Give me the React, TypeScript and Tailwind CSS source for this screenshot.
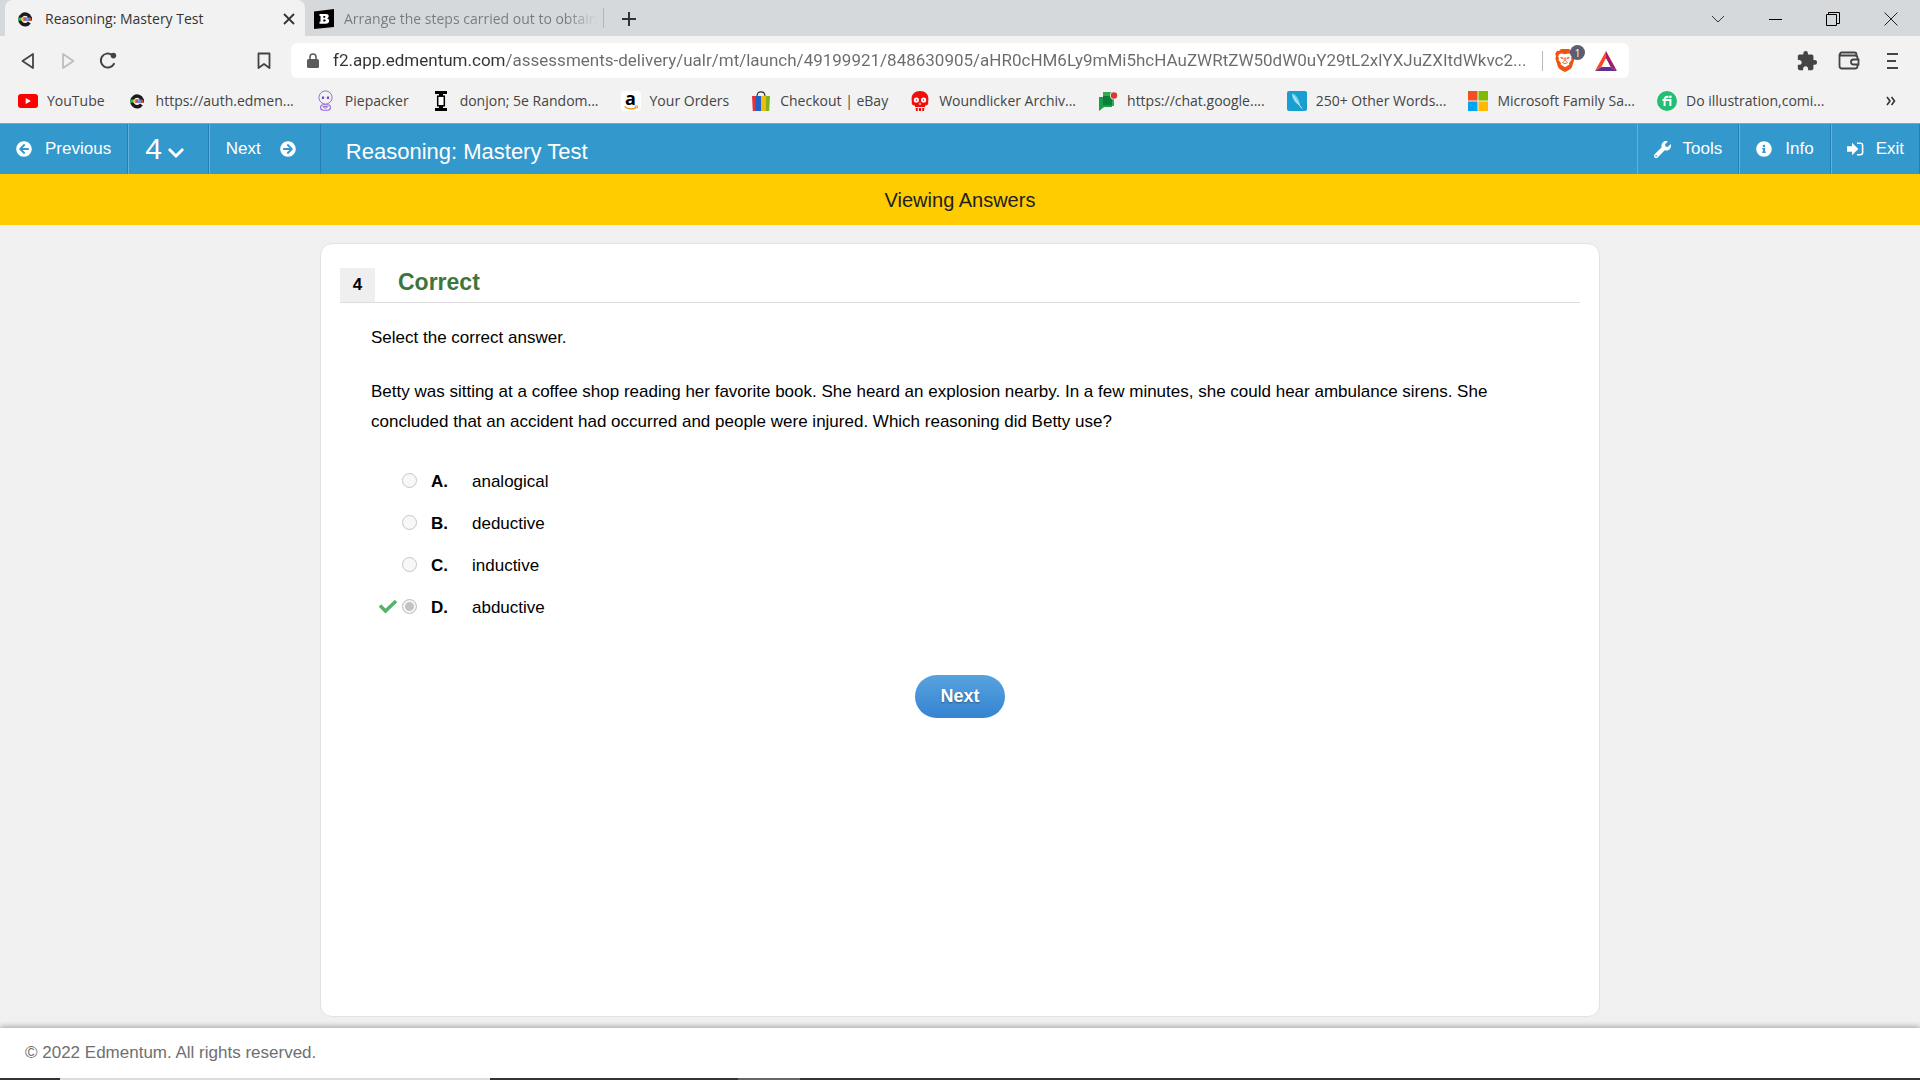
import React from "react";
import type { ReactNode } from "react";
import { FaArrowCircleLeft, FaArrowCircleRight, FaChevronDown, FaInfoCircle, FaWrench } from "react-icons/fa";
import { MdExtension } from "react-icons/md";

const PATH =
  "f2.app.edmentum.com/assessments-delivery/ualr/mt/launch/49199921/848630905/aHR0cHM6Ly9mMi5hcHAuZWRtZW50dW0uY29tL2xlYXJuZXItdWkvc2...";

function EdmentumIcon() {
  return (
    <svg width="20" height="16" viewBox="0 0 20 16" aria-hidden="true">
      <path d="M15 6.500A5.200 5.400 0 1 0 14.400 11.500" fill="none" stroke="#1b1b1b" strokeWidth="3.400" />
      <path d="M8 9.500h9V6h-4z" fill="#1b1b1b" />
      <rect x="3.200" y="6.600" width="3" height="3" fill="#2fb457" />
      <rect x="6" y="6.600" width="3" height="3" fill="#f6c21c" />
      <rect x="8.400" y="6.200" width="3" height="3.600" fill="#ef3f7f" />
      <rect x="11" y="6.600" width="3" height="3" fill="#36b3e6" />
      <rect x="13.600" y="6.600" width="2.800" height="3" fill="#e2403b" />
    </svg>
  );
}

function YouTubeIcon() {
  return (
    <svg width="20" height="20" viewBox="0 0 20 20" aria-hidden="true">
      <rect y="3" width="20" height="14" rx="3" fill="#f00" />
      <path d="M7.700 7v6l5.200-3z" fill="#fff" />
    </svg>
  );
}

function PiepackerIcon() {
  return (
    <svg width="20" height="22" viewBox="0 0 20 22" fill="none" stroke="#9a6be0" aria-hidden="true">
      <circle cx="9.500" cy="7.500" r="6.600" strokeWidth="1" />
      <rect x="4.600" y="14.800" width="9.800" height="5.400" rx="2.700" strokeWidth="1.100" />
      <path d="M7 16.600c.8 2 3.900 2 4.800 0z" strokeWidth="1" />
      <path d="M7 6.500v2.500M12 6.500v2.500" stroke="#7b46cf" strokeWidth="2.200" />
    </svg>
  );
}

function DonjonIcon() {
  return (
    <svg width="20" height="20" viewBox="0 0 20 20" aria-hidden="true">
      <path d="M4 0h12v3h-4v2H8V3H4zM4 20h12v-3h-4v-2H8v2H4z" fill="#000" />
      <rect x="6.700" y="5.200" width="6.600" height="9.600" fill="#fff" stroke="#000" strokeWidth="1.500" />
    </svg>
  );
}

function AmazonIcon() {
  return (
    <span className="flex h-5 w-5 flex-col items-center rounded-sm bg-white">
      <span className="h-3.5 text-[18px] leading-[14px] font-bold text-black">a</span>
      <svg width="16" height="6" viewBox="0 0 16 6" aria-hidden="true">
        <path d="M1.500 1.500c4 3.200 9 3.200 12 .6" fill="none" stroke="#f39a1e" strokeWidth="1.500" />
        <path d="M11.600 1l3-.2-.6 2.800" fill="none" stroke="#f39a1e" strokeWidth="1" />
      </svg>
    </span>
  );
}

function EbayIcon() {
  return (
    <svg width="20" height="20" viewBox="0 0 20 20" aria-hidden="true">
      <path d="M6 5.500C6 2 7.500.8 10 .8s4 1.200 4 4.700" fill="none" stroke="#333" strokeWidth="1.200" />
      <path d="M1 5h4.600v15H1.800z" fill="#e2323b" />
      <path d="M4.600 5H10v15H4.600z" fill="#1f63c9" />
      <path d="M10 5h5v15h-5z" fill="#f5b80c" />
      <path d="M15 5h4l-.8 15H15z" fill="#7fb51c" />
    </svg>
  );
}

function SkullIcon() {
  return (
    <svg width="20" height="20" viewBox="0 0 20 20" aria-hidden="true">
      <path
        d="M10 0C4.800 0 1.600 3.200 1.600 7.600c0 2.600.4 3.200.2 5.400.8 1.400 2.400 1.400 3.200 1.700V16h10v-1.300c.8-.3 2.400-.3 3.200-1.700-.2-2.200.2-2.800.2-5.400C18.400 3.200 15.200 0 10 0z"
        fill="#f20d0d"
      />
      <path d="M5.600 17h2.200v3H6zM8.900 17h2.200v3H8.900zM12.200 17h2.200L14 20h-1.800z" fill="#f20d0d" />
      <circle cx="6.400" cy="9" r="2.600" fill="#fff" />
      <circle cx="13.600" cy="9" r="2.600" fill="#fff" />
      <path d="M10 11.400l-1.200 2.200h2.400z" fill="#fff" />
      <circle cx="6.600" cy="9" r=".7" fill="#f20d0d" />
      <circle cx="13.400" cy="9" r=".7" fill="#f20d0d" />
    </svg>
  );
}

function ChatIcon() {
  return (
    <svg width="20" height="20" viewBox="0 0 20 20" aria-hidden="true">
      <path d="M5 1h11v14H5z" fill="#34a853" />
      <path d="M1 6h4v8h9v2H6l-5 4z" fill="#14a044" />
      <path d="M5 5h9v9H5z" fill="#0b7f38" />
      <circle cx="16" cy="4.500" r="4" fill="#f2f2f2" />
      <circle cx="16" cy="4.500" r="3.200" fill="#d53b36" />
    </svg>
  );
}

function FeatherIcon() {
  return (
    <svg width="20" height="20" viewBox="0 0 20 20" aria-hidden="true">
      <rect width="20" height="20" rx="2" fill="#189fd0" />
      <path d="M5 2.500c3.500.2 7.500 6 8 11.500-4-.5-8.200-5.500-8-11.500z" fill="#7fcdea" />
      <path d="M6 4.500c2.500 4 5 8.500 9 13" stroke="#d9f3fc" strokeWidth="1" fill="none" />
    </svg>
  );
}

function MicrosoftIcon() {
  return (
    <svg width="20" height="20" viewBox="0 0 20 20" aria-hidden="true">
      <path d="M0 0h9.500v9.500H0z" fill="#f25022" />
      <path d="M10.500 0H20v9.500h-9.500z" fill="#7fba00" />
      <path d="M0 10.500h9.500V20H0z" fill="#00a4ef" />
      <path d="M10.500 10.500H20V20h-9.500z" fill="#ffb900" />
    </svg>
  );
}

function FiverrIcon() {
  return (
    <svg width="20" height="20" viewBox="0 0 20 20" aria-hidden="true">
      <circle cx="10" cy="10" r="10" fill="#22be74" />
      <path d="M7.600 15V8.600c0-2 .8-2.900 3-2.900h.9M5.400 9h8v6" fill="none" stroke="#fff" strokeWidth="2" />
      <circle cx="13.400" cy="5.900" r="1.300" fill="#fff" />
    </svg>
  );
}

function BrainlyIcon() {
  return (
    <svg width="20" height="20" viewBox="0 0 20 20" aria-hidden="true">
      <path d="M0 2.500L20 0v18L0 20z" fill="#000" />
      <path
        d="M5.500 5h6.200c2 0 3 .9 3 2.300 0 1-.6 1.800-1.600 2.100 1.300.2 2.100 1.100 2.100 2.400 0 1.900-1.400 2.900-3.600 2.900H5.500v-2h1V7h-1z"
        fill="#fff"
      />
      <path d="M9.300 7v1.700h1.200q.9 0 .9-.9 0-.8-.9-.8zM9.300 10.600v2h1.400q1 0 1-1t-1-1z" fill="#000" />
    </svg>
  );
}

function BraveIcon() {
  return (
    <svg width="20" height="23" viewBox="0 0 20 23" aria-hidden="true">
      <path d="M6 0h8l2 2 2-.2L19.800 5l-.8 2 .6 2.500L17 18c-.5 1.500-3.500 3.400-7 5-3.500-1.600-6.500-3.500-7-5L.4 9.500 1 7 .2 5 2 1.800 4 2z" fill="#f1520f" />
      <path d="M4.200 5l2.600-.6 3.200.8 3.200-.8 2.600.6 1.200 2.600-1 1.400.6 1.800-2.600 3.400.4 1.400L12 17l-2 1.200L8 17l-2.400-1.400.4-1.400-2.600-3.400L4 9 3 7.600z" fill="#fff" />
      <path d="M5 8l3 .6.6 1-1.800.3zM15 8l-3 .6-.6 1 1.800.3z" fill="#f1520f" />
      <path d="M9.300 8.500v3.500l-1.800 1.600L10 14.800l2.500-1.200-1.800-1.600V8.500" fill="none" stroke="#f1520f" strokeWidth=".8" />
    </svg>
  );
}

function BatIcon() {
  return (
    <svg width="22" height="20" viewBox="0 0 22 20" aria-hidden="true">
      <path d="M11 0L0 20l6.500-4L11 7.500z" fill="#ff4724" />
      <path d="M11 0l11 20-6.500-4L11 7.500z" fill="#9e1f63" />
      <path d="M0 20h22l-6.500-4h-9z" fill="#662d91" />
      <path d="M11 7.500L15.500 16h-9z" fill="#fff" />
    </svg>
  );
}

function ExitIcon() {
  return (
    <svg width="17" height="16" viewBox="0 0 17 16" fill="#fff" aria-hidden="true">
      <path d="M0 5.300h5V1.800L11.300 8 5 14.200v-3.500H0z" />
      <path d="M10 1.500h3.400c1.900 0 3 1.100 3 2.900v7.200c0 1.800-1.100 2.900-3 2.900H10v-1.600h3.300c1 0 1.500-.5 1.500-1.400V4.500c0-.9-.5-1.400-1.500-1.400H10z" />
    </svg>
  );
}

const bookmarks: { label: string; icon: ReactNode }[] = [
  { label: "YouTube", icon: <YouTubeIcon /> },
  { label: "https://auth.edmen...", icon: <EdmentumIcon /> },
  { label: "Piepacker", icon: <PiepackerIcon /> },
  { label: "donjon; 5e Random...", icon: <DonjonIcon /> },
  { label: "Your Orders", icon: <AmazonIcon /> },
  { label: "Checkout | eBay", icon: <EbayIcon /> },
  { label: "Woundlicker Archiv...", icon: <SkullIcon /> },
  { label: "https://chat.google....", icon: <ChatIcon /> },
  { label: "250+ Other Words...", icon: <FeatherIcon /> },
  { label: "Microsoft Family Sa...", icon: <MicrosoftIcon /> },
  { label: "Do illustration,comi...", icon: <FiverrIcon /> },
];

function TabStrip() {
  return (
    <div className="flex h-9 items-stretch bg-[#d5d9dc] pl-[5px] text-sm text-[#333]">
      <div className="flex w-[300px] items-center rounded-t-lg bg-[#f2f2f2] pt-0.5 pr-2 pl-2.5">
        <EdmentumIcon />
        <span className="ml-2.5 flex-1">Reasoning: Mastery Test</span>
        <button aria-label="Close tab" className="p-0.5">
          <svg width="12" height="12" viewBox="0 0 12 12" stroke="#333" strokeWidth="1.800" aria-hidden="true">
            <path d="M1 1l10 10M11 1L1 11" />
          </svg>
        </button>
      </div>
      <div className="flex w-[298px] items-center pt-0.5 pl-[9px]">
        <BrainlyIcon />
        <span className="ml-2.5 bg-[linear-gradient(90deg,#777a7c_88%,transparent)] bg-clip-text whitespace-nowrap text-transparent">
          Arrange the steps carried out to obtain
        </span>
      </div>
      <div className="my-2 w-px bg-[#b3b7ba]" />
      <button aria-label="New tab" className="px-[17px] pt-0.5">
        <svg width="16" height="16" viewBox="0 0 16 16" stroke="#333" strokeWidth="2" aria-hidden="true">
          <path d="M8 1v14M1 8h14" />
        </svg>
      </button>
      <div className="ml-auto flex items-center gap-11 pt-0.5 pr-[22px]">
        <button aria-label="Search tabs">
          <svg width="14" height="14" viewBox="0 0 14 14" fill="none" stroke="#333" aria-hidden="true">
            <path d="M1 4l6 6 6-6" />
          </svg>
        </button>
        <button aria-label="Minimize">
          <svg width="13" height="14" viewBox="0 0 13 14" aria-hidden="true">
            <path d="M0 7h13v1H0z" />
          </svg>
        </button>
        <button aria-label="Restore">
          <svg width="14" height="14" viewBox="0 0 14 14" fill="none" stroke="#000" aria-hidden="true">
            <path d="M.5 2.500h10v11H.500zM2.500 2.500v-2h11v11h-3" />
          </svg>
        </button>
        <button aria-label="Close window">
          <svg width="14" height="14" viewBox="0 0 14 14" fill="none" stroke="#222" aria-hidden="true">
            <path d="M.5.5l13 13M13.500.5l-13 13" />
          </svg>
        </button>
      </div>
    </div>
  );
}

function Toolbar() {
  return (
    <div className="flex h-[49px] items-center bg-[#f2f2f2] pl-5">
      <div className="flex items-center">
        <button aria-label="Back" className="w-10">
          <svg width="16" height="18" viewBox="0 0 16 18" fill="none" stroke="#444" strokeWidth="1.800" strokeLinejoin="round" aria-hidden="true">
            <path d="M13 2v14L2.500 9z" />
          </svg>
        </button>
        <button aria-label="Forward" className="w-[38px]">
          <svg width="16" height="18" viewBox="0 0 16 18" fill="none" stroke="#bdbdbd" strokeWidth="1.800" strokeLinejoin="round" aria-hidden="true">
            <path d="M3 2v14l10.500-7z" />
          </svg>
        </button>
        <button aria-label="Reload">
          <svg width="20" height="20" viewBox="0 0 20 20" fill="none" stroke="#444" strokeWidth="2" aria-hidden="true">
            <path d="M16 12.800A7 7 0 1 1 14 3.900" strokeLinecap="round" />
            <circle cx="15.400" cy="4.600" r="2.800" fill="#444" stroke="none" />
          </svg>
        </button>
      </div>
      <button aria-label="Bookmark this page" className="ml-[137px]">
        <svg width="18" height="18" viewBox="0 0 18 18" fill="none" stroke="#444" strokeWidth="1.800" strokeLinejoin="round" aria-hidden="true">
          <path d="M3.500 1.500h11V16L9 12l-5.500 4z" />
        </svg>
      </button>
      <div className="ml-[18px] flex h-[35px] min-w-0 flex-1 items-center rounded-md bg-white pr-3 pl-4">
        <svg width="12" height="16" viewBox="0 0 12 16" aria-hidden="true">
          <rect x="0" y="6" width="12" height="9" rx="1.500" fill="#5c5c5c" />
          <path d="M3 6.500V4a3 3 0 0 1 6 0v2.500" fill="none" stroke="#5c5c5c" strokeWidth="1.600" />
        </svg>
        <input
          aria-label="Address"
          readOnly
          value={PATH}
          className="ml-3.5 min-w-0 flex-1 bg-[linear-gradient(90deg,#333_173px,#6b6b6b_173px)] bg-clip-text font-[Roboto,sans-serif] text-[17px] text-transparent outline-none"
        />
        <span className="mr-3 h-5 w-px bg-[#b8b8b8]" />
        <button aria-label="Brave Shields, 1 blocked" className="relative w-8">
          <BraveIcon />
          <span className="absolute -top-1 right-0.5 flex h-[15px] w-[15px] items-center justify-center rounded-full bg-[#5b5d73] text-[10px] leading-none text-white">
            1
          </span>
        </button>
        <button aria-label="Brave Rewards" className="ml-2">
          <BatIcon />
        </button>
      </div>
      <div className="ml-[167px] flex items-center pr-[21px]">
        <button aria-label="Extensions">
          <MdExtension className="h-[22px] w-[22px] text-[#444]" />
        </button>
        <button aria-label="Wallet" className="ml-5">
          <svg width="22" height="20" viewBox="0 0 22 20" fill="none" stroke="#444" strokeWidth="1.800" aria-hidden="true">
            <path d="M19.500 8.500V7A2.500 2.500 0 0 0 17 4.500H3.500a1.500 1.500 0 0 1 0-3H16.500a2 2 0 0 1 2 2v2M1.500 3v12A2.500 2.500 0 0 0 4 17.500h13a2.500 2.500 0 0 0 2.500-2.500v-1.500" />
            <path d="M20.500 8.500h-5a2.500 2.500 0 0 0 0 5h5z" />
          </svg>
        </button>
        <button aria-label="Menu" className="ml-[26px]">
          <svg width="13" height="18" viewBox="0 0 13 18" stroke="#444" strokeWidth="1.800" aria-hidden="true">
            <path d="M1 2h11M1 9h9M1 16h11" />
          </svg>
        </button>
      </div>
    </div>
  );
}

function BookmarksBar() {
  return (
    <nav aria-label="Bookmarks" className="flex h-[38px] items-center gap-[22px] bg-[#f2f2f2] pb-1.5 pl-[18px] text-sm whitespace-nowrap text-[#444]">
      {bookmarks.map((b) => (
        <a key={b.label} href="#" className="flex items-center gap-[9px]">
          <span className="flex h-5 w-5 items-center justify-center">{b.icon}</span>
          {b.label}
        </a>
      ))}
      <button aria-label="More bookmarks" className="mr-6 ml-auto">
        <svg width="10" height="10" viewBox="0 0 10 10" fill="none" stroke="#333" strokeWidth="1.600" aria-hidden="true">
          <path d="M1 1l3 4-3 4M5.500 1l3 4-3 4" />
        </svg>
      </button>
    </nav>
  );
}

function LessonBar() {
  return (
    <header className="flex h-[51px] items-stretch border-t border-[#5fb0dd] bg-[#3398cc] text-[17px] text-white">
      <button className="flex items-center gap-[13px] border-r border-[#2580b3] px-4">
        <FaArrowCircleLeft className="h-4 w-4" />
        Previous
      </button>
      <button aria-label="Question 4" className="flex items-center border-r border-l border-r-[#2580b3] border-l-[#62b1dc] pr-6 pl-4">
        <span className="text-[30px] leading-none">4</span>
        <FaChevronDown className="mt-2 ml-1.5 h-5 w-4" />
      </button>
      <button className="flex items-center gap-[19px] border-r border-l border-r-[#2580b3] border-l-[#62b1dc] pr-6 pl-4">
        Next
        <FaArrowCircleRight className="h-4 w-4" />
      </button>
      <h1 className="flex items-center pt-1 pl-[25px] text-[22px]">Reasoning: Mastery Test</h1>
      <div className="ml-auto flex items-stretch">
        <button className="flex items-center gap-3 border-r border-l border-r-[#2580b3] border-l-[#62b1dc] px-4">
          <FaWrench className="h-[17px] w-[17px]" />
          Tools
        </button>
        <button className="flex items-center gap-[13px] border-r border-l border-r-[#2580b3] border-l-[#62b1dc] px-4">
          <FaInfoCircle className="h-4 w-4" />
          Info
        </button>
        <button className="flex items-center gap-3 border-r border-l border-r-[#2580b3] border-l-[#62b1dc] px-[15px]">
          <ExitIcon />
          Exit
        </button>
      </div>
    </header>
  );
}

const options = [
  { letter: "A", text: "analogical" },
  { letter: "B", text: "deductive" },
  { letter: "C", text: "inductive" },
  { letter: "D", text: "abductive", chosen: true },
];

function Question() {
  return (
    <article className="mx-auto flex w-full max-w-[1280px] flex-1 flex-col rounded-xl border border-[#e2e2e2] bg-white px-[19px] pt-6 text-[17px] text-black">
      <div className="flex items-center border-b border-[#ddd]">
        <span className="flex h-[34px] w-[35px] items-center justify-center bg-[#efefef] font-bold">4</span>
        <h2 className="mb-1.5 ml-[23px] text-[23px] leading-7 font-bold text-[#3c763d]">Correct</h2>
      </div>
      <div className="px-[31px] pt-5 leading-[30px]">
        <p>Select the correct answer.</p>
        <p className="mt-6">
          Betty was sitting at a coffee shop reading her favorite book. She heard an explosion nearby. In a few minutes,
          she could hear ambulance sirens. She concluded that an accident had occurred and people were injured. Which
          reasoning did Betty use?
        </p>
      </div>
      <fieldset aria-label="Answers" className="mt-6 pl-[38px]">
        {options.map((o) => (
          <label key={o.letter} className="flex h-[42px] items-center">
            <span className="flex w-6 items-center pb-1">
              {o.chosen && (
                <svg width="20" height="15" viewBox="0 0 20 15" fill="none" stroke="#55b26b" strokeWidth="3.400" aria-label="Correct">
                  <path d="M2 6.500l5.500 5.500L18 2" />
                </svg>
              )}
            </span>
            <input
              type="radio"
              name="answer"
              disabled
              defaultChecked={o.chosen}
              className="mb-1 h-[15px] w-[15px] appearance-none rounded-full border border-[#c6c6c6] bg-[#f8f8f8] checked:bg-[#c3c3c3] checked:shadow-[inset_0_0_0_2px_#f8f8f8]"
            />
            <span className="ml-3.5 w-[41px] font-bold">{o.letter}.</span>
            <span>{o.text}</span>
          </label>
        ))}
      </fieldset>
      <button className="mt-[46px] self-center rounded-full bg-linear-to-b from-[#57a3de] to-[#3583d2] px-[25px] py-[9px] text-[18px] leading-[25px] font-bold text-white text-shadow-[0_1px_2px_rgb(0_0_0/0.4)]">
        Next
      </button>
    </article>
  );
}

function TaskbarEdge() {
  return (
    <div className="flex h-0.5 bg-[#333]" aria-hidden="true">
      <div className="ml-[60px] w-[430px] bg-[#ddd]" />
      <div className="ml-[248px] w-[62px] bg-[#666]" />
    </div>
  );
}

export default function App() {
  return (
    <div className="flex min-h-screen flex-col bg-[#f0f0f0] font-['Liberation_Sans',Arial,sans-serif]">
      <div className="font-['Open_Sans','Segoe_UI',sans-serif]">
        <TabStrip />
        <Toolbar />
        <BookmarksBar />
      </div>
      <LessonBar />
      <p className="flex h-[51px] items-center justify-center bg-[#fc0] text-xl text-[#222]">Viewing Answers</p>
      <main className="flex flex-1 flex-col px-5 pt-[18px] pb-[11px]">
        <Question />
      </main>
      <footer className="flex h-[50px] items-center bg-white pl-[25px] text-[17px] text-[#6f6f6f] shadow-[0_-1px_6px_rgba(0,0,0,0.35)]">
        © 2022 Edmentum. All rights reserved.
      </footer>
      <TaskbarEdge />
    </div>
  );
}
